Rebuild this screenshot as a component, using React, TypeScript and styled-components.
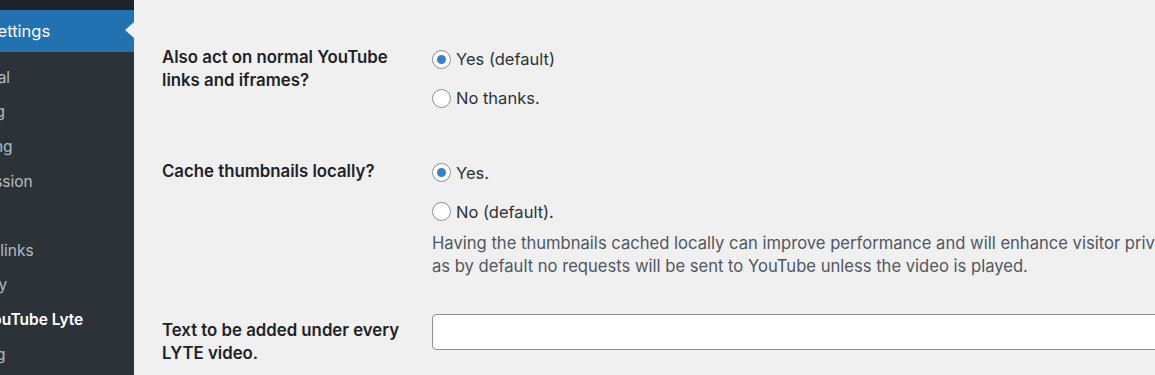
import React from "react";
import styled, { createGlobalStyle } from "styled-components";

const Global = createGlobalStyle`
  html, body { margin: 0; padding: 0; background: #f0f0f1; }
  body { font-family: Inter, "Liberation Sans", Arial, sans-serif; -webkit-font-smoothing: antialiased; }
  * { box-sizing: border-box; }
`;

const Page = styled.div`
  display: flex;
  width: 100vw;
  height: 375px;
  overflow: hidden;
  background: #f0f0f1;
`;

const Sidebar = styled.nav`
  flex: 0 0 194px;
  margin-left: -60px;
  background: #2c3338;
  display: flex;
  flex-direction: column;
`;

const TopStrip = styled.div`
  height: 10px;
  background: #1d2327;
`;

const ActiveMenu = styled.div`
  position: relative;
  height: 42px;
  display: flex;
  align-items: center;
  padding-left: 47px;
  background: #2271b1;
  color: #fff;
  font-size: 16.5px;
  white-space: nowrap;
  &::after {
    content: "";
    position: absolute;
    right: 0;
    top: 12px;
    border-style: solid;
    border-width: 8px 9px 8px 0;
    border-color: transparent #f0f0f1 transparent transparent;
  }
`;

const SubMenu = styled.ul`
  list-style: none;
  margin: 0;
  padding: 8px 0 0;
`;

const SubItem = styled.li<{ $current?: boolean }>`
  height: 34.6px;
  display: flex;
  align-items: center;
  padding-left: 13px;
  white-space: nowrap;
  font-size: 15.5px;
  color: ${(p) => (p.$current ? "#fff" : "rgba(240,246,252,0.7)")};
  font-weight: ${(p) => (p.$current ? 600 : 400)};
`;

const Main = styled.main`
  flex: 1 1 auto;
  min-width: 0;
  padding: 26px 0 0 28px;
`;

const Row = styled.div<{ $padTop: number; $padBottom: number }>`
  display: grid;
  grid-template-columns: 270px 1fr;
  padding-bottom: ${(p) => p.$padBottom}px;
  & > :last-child {
    padding-top: ${(p) => p.$padTop}px;
  }
`;

const Label = styled.div`
  padding-top: 20px;
  width: 255px;
  font-size: 16.8px;
  line-height: 23px;
  font-weight: 600;
  color: #1d2327;
`;

const Field = styled.div`
  min-width: 0;
`;

const Options = styled.div`
  display: flex;
  flex-direction: column;
  gap: 16px;
`;

const Option = styled.label`
  display: flex;
  align-items: center;
  gap: 5px;
  height: 23px;
  font-size: 16.5px;
  color: #2c3338;
  white-space: nowrap;
`;

const Radio = styled.span<{ $checked?: boolean }>`
  width: 19px;
  height: 19px;
  border-radius: 50%;
  border: 1px solid #8c8f94;
  background: #fff;
  display: flex;
  align-items: center;
  justify-content: center;
  flex: 0 0 auto;
  &::before {
    content: "";
    width: 9px;
    height: 9px;
    border-radius: 50%;
    background: ${(p) => (p.$checked ? "#3582c4" : "transparent")};
  }
`;

const Description = styled.p`
  margin: 9px 0 0;
  font-size: 16.6px;
  line-height: 23px;
  color: #50575e;
  white-space: nowrap;
`;

const TextInput = styled.input`
  display: block;
  width: 820px;
  height: 36px;
  border: 1px solid #8c8f94;
  border-radius: 4px;
  background: #fff;
  padding: 0 8px;
  font: inherit;
  font-size: 15px;
  outline: none;
`;

const subItems = [
  "General",
  "Writing",
  "Reading",
  "Discussion",
  "Media",
  "Permalinks",
  "Privacy",
  "WP YouTube Lyte",
  "Mailing",
];

export default function App() {
  return (
    <>
      <Global />
      <Page>
        <Sidebar>
          <TopStrip />
          <ActiveMenu>Settings</ActiveMenu>
          <SubMenu>
            {subItems.map((s) => (
              <SubItem key={s} $current={s === "WP YouTube Lyte"}>
                {s}
              </SubItem>
            ))}
          </SubMenu>
        </Sidebar>
        <Main>
          <Row $padTop={21.5} $padBottom={30}>
            <Label>Also act on normal YouTube links and iframes?</Label>
            <Field>
              <Options>
                <Option>
                  <Radio $checked />
                  Yes (default)
                </Option>
                <Option>
                  <Radio />
                  No thanks.
                </Option>
              </Options>
            </Field>
          </Row>
          <Row $padTop={21.5} $padBottom={21}>
            <Label>Cache thumbnails locally?</Label>
            <Field>
              <Options>
                <Option>
                  <Radio $checked />
                  Yes.
                </Option>
                <Option>
                  <Radio />
                  No (default).
                </Option>
              </Options>
              <Description>
                Having the thumbnails cached locally can improve performance and will enhance visitor privacy,
                <br />
                as by default no requests will be sent to YouTube unless the video is played.
              </Description>
            </Field>
          </Row>
          <Row $padTop={14.5} $padBottom={0}>
            <Label>Text to be added under every LYTE video.</Label>
            <Field>
              <TextInput type="text" />
            </Field>
          </Row>
        </Main>
      </Page>
    </>
  );
}
